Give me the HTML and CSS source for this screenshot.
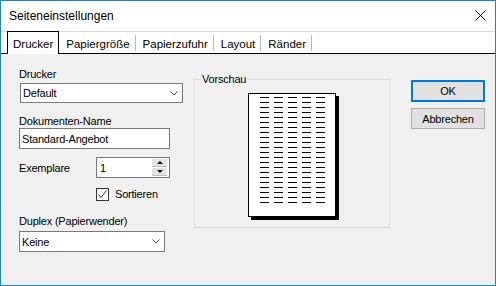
FILE: index.html
```html
<!DOCTYPE html>
<html lang="de">
<head>
  <meta charset="UTF-8" />
  <title>Seiteneinstellungen</title>
  <link rel="stylesheet" href="styles.css">
</head>
<body>
  <div class="dialog">
    <div class="titlebar">
      <span class="title">Seiteneinstellungen</span>
      <svg class="close" width="11" height="11" viewBox="0 0 11 11"><path d="M0.5 0.5L10.5 10.5M10.5 0.5L0.5 10.5" stroke="#000" fill="none"/></svg>
    </div>

    <div class="tabs">
      <div class="tab active">Drucker</div>
      <div class="tab">Papiergröße</div>
      <div class="tab">Papierzufuhr</div>
      <div class="tab">Layout</div>
      <div class="tab">Ränder</div>
    </div>

    <div class="content">
      <div class="form">
        <div class="label">Drucker</div>
        <div class="combo combo-printer">
          <span>Default</span>
          <svg width="8" height="5" viewBox="0 0 8 5"><path d="M0.5 0.5L4 4L7.5 0.5" fill="none" stroke="#555"/></svg>
        </div>

        <div class="label label-doc">Dokumenten-Name</div>
        <input class="edit" type="text" value="Standard-Angebot">

        <div class="copies">
          <span class="label">Exemplare</span>
          <div class="spin">
            <span class="spin-value">1</span>
            <div class="spin-btns">
              <span class="spin-btn"><span class="arrow-up"></span></span>
              <span class="spin-btn"><span class="arrow-down"></span></span>
            </div>
          </div>
        </div>

        <div class="check">
          <span class="box">
            <svg width="11" height="11" viewBox="0 0 11 11"><path d="M1.5 5.5L4 8.5L9.5 1.5" fill="none" stroke="#333"/></svg>
          </span>
          <span class="label">Sortieren</span>
        </div>

        <div class="label label-duplex">Duplex (Papierwender)</div>
        <div class="combo combo-duplex">
          <span>Keine</span>
          <svg width="8" height="5" viewBox="0 0 8 5"><path d="M0.5 0.5L4 4L7.5 0.5" fill="none" stroke="#555"/></svg>
        </div>
      </div>

      <fieldset class="preview">
        <legend>Vorschau</legend>
        <svg class="page" width="91" height="127" viewBox="0 0 91 127">
          <defs>
            <pattern id="lines" width="14" height="5" patternUnits="userSpaceOnUse" x="12" y="4">
              <rect width="9" height="1" fill="#000"/>
            </pattern>
          </defs>
          <rect x="3" y="3" width="88" height="124" fill="#000"/>
          <rect x="0.5" y="0.5" width="87" height="123" fill="#fff" stroke="#000"/>
          <rect x="12" y="4" width="65" height="106" fill="url(#lines)"/>
        </svg>
      </fieldset>

      <div class="buttons">
        <button class="btn default">OK</button>
        <button class="btn">Abbrechen</button>
      </div>
    </div>
  </div>
</body>
</html>
```

FILE: styles.css
```css
* {
  box-sizing: border-box;
}
body {
  margin: 0;
  font-family: "Liberation Sans", Arial, sans-serif;
  font-size: 11px;
  color: #000;
}
.dialog {
  width: 496px;
  height: 286px;
  border: 1px solid #1883d7;
  background: #f0f0f0;
  display: flex;
  flex-direction: column;
}
.titlebar {
  height: 30px;
  background: #fff;
  display: flex;
  align-items: center;
  justify-content: space-between;
  padding: 0 9px 1px 8px;
}
.title {
  font-size: 12px;
}
.tabs {
  display: flex;
  height: 23px;
  border-top: 1px solid #d9d9d9;
  border-bottom: 1px solid #000;
  background: #fff;
  padding-left: 6px;
}
.tab {
  font-size: 11.5px;
  line-height: 12px;
  margin: 3px 0 2px;
  padding: 3px 5px 0 7px;
  border-right: 1px solid #b9b9b9;
}
.tab.active {
  margin: -1px 0 -1px;
  padding: 6px 5px 0 5px;
  border: 1px solid #000;
  border-bottom: 0;
  background: #fff;
}
.content {
  display: flex;
  align-items: flex-start;
  padding: 14px 0 0 18px;
}
.form {
  width: 165px;
  display: flex;
  flex-direction: column;
  align-items: flex-start;
}
.label {
  line-height: 13px;
  letter-spacing: -0.2px;
}
.combo {
  display: flex;
  align-items: center;
  justify-content: space-between;
  height: 20px;
  border: 1px solid #7a7a7a;
  background: #fff;
  padding: 0 4px 0 2px;
  margin-top: 2px;
  letter-spacing: -0.2px;
}
.combo-printer {
  width: 163px;
  margin-left: 1px;
}
.label-doc {
  margin-top: 12px;
}
.edit {
  width: 151px;
  height: 21px;
  margin: 0;
  padding: 0 2px;
  border: 1px solid #7a7a7a;
  font: inherit;
  letter-spacing: -0.2px;
  color: #000;
  outline: none;
}
.copies {
  display: flex;
  align-items: center;
  margin-top: 8px;
}
.copies .label {
  width: 77px;
  padding-top: 2px;
}
.spin {
  width: 74px;
  height: 21px;
  border: 1px solid #7a7a7a;
  background: #fff;
  display: flex;
  align-items: center;
  padding: 1px 2px 1px 3px;
}
.spin-value {
  flex: 1;
}
.spin-btns {
  width: 15px;
  height: 17px;
  display: flex;
  flex-direction: column;
  gap: 1px;
  align-self: flex-start;
}
.spin-btn {
  flex: 1;
  background: #e3e3e3;
  border-bottom: 1px solid #bdbdbd;
  display: flex;
  align-items: center;
  justify-content: center;
}
.arrow-up {
  border-left: 3px solid transparent;
  border-right: 3px solid transparent;
  border-bottom: 3px solid #000;
}
.arrow-down {
  border-left: 3px solid transparent;
  border-right: 3px solid transparent;
  border-top: 3px solid #000;
}
.check {
  display: flex;
  align-items: center;
  gap: 6px;
  margin: 10px 0 0 77px;
}
.box {
  width: 13px;
  height: 13px;
  border: 1px solid #333;
  background: #fff;
  display: flex;
}
.label-duplex {
  margin-top: 14px;
}
.combo-duplex {
  width: 146px;
  height: 21px;
  margin-top: 3px;
}
.preview {
  width: 196px;
  height: 155px;
  margin: 5px 0 0 10px;
  padding: 0;
  min-width: 0;
  border: 1px solid #dcdcdc;
}
.preview legend {
  margin-left: 6px;
  padding: 0 1px;
  line-height: 13px;
  letter-spacing: -0.2px;
}
.page {
  display: block;
  margin: 7px 0 0 53px;
}
.buttons {
  display: flex;
  flex-direction: column;
  gap: 6px;
  margin: 12px 0 0 21px;
}
.btn {
  width: 74px;
  height: 21px;
  padding: 0;
  border: 1px solid #adadad;
  background: #e1e1e1;
  font: inherit;
  letter-spacing: -0.2px;
  color: #000;
}
.btn.default {
  height: 22px;
  border-color: #0078d7;
  box-shadow: inset 0 0 0 1px #0078d7;
}
```
